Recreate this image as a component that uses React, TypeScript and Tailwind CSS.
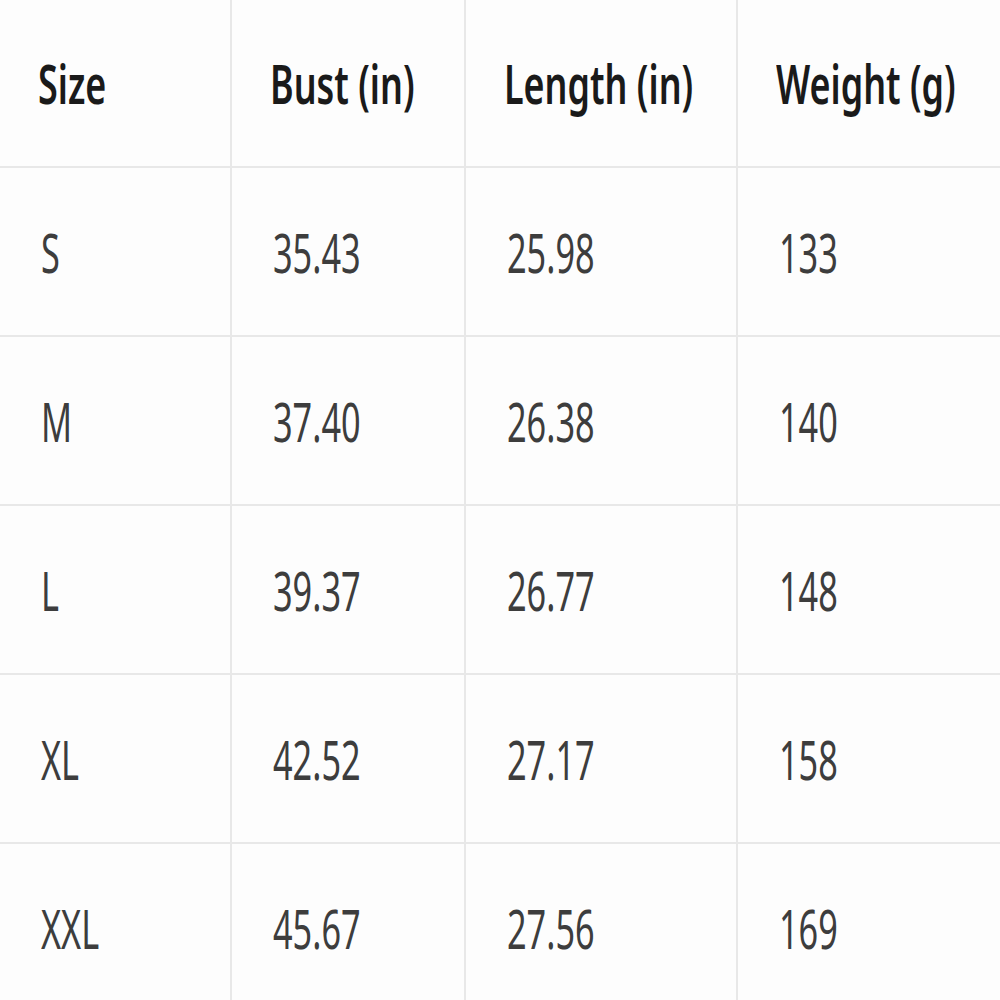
const headers = ['Size', 'Bust (in)', 'Length (in)', 'Weight (g)'];

const rows = [
  ['S', '35.43', '25.98', '133'],
  ['M', '37.40', '26.38', '140'],
  ['L', '39.37', '26.77', '148'],
  ['XL', '42.52', '27.17', '158'],
  ['XXL', '45.67', '27.56', '169'],
];

// column widths incl. right border
const colClass = ['w-[232px] border-r-2', 'w-[234px] border-r-2', 'w-[272px] border-r-2', 'w-[262px]'];

function Cell({ text, col, header }: { text: string; col: number; header?: boolean }) {
  return (
    <div
      className={`flex shrink-0 items-center border-b-2 border-[#e8e8e8] ${colClass[col]} ${
        header ? 'h-[168px] pl-[38px]' : 'h-[169px] pl-[41px]'
      }`}
    >
      <span
        className={`inline-block origin-left whitespace-nowrap text-[54px] leading-none ${
          header
            ? 'scale-x-[0.665] font-semibold text-[#1a1a1a]'
            : 'scale-x-[0.635] font-normal text-[#3d3d3d]'
        }`}
      >
        {text}
      </span>
    </div>
  );
}

export default function App() {
  return (
    <div
      className="h-[1000px] w-[1000px] overflow-hidden bg-[#fdfdfd]"
      style={{ fontFamily: '"Noto Sans", "Open Sans", sans-serif' }}
    >
      <div className="flex">
        {headers.map((h, i) => (
          <Cell key={h} text={h} col={i} header />
        ))}
      </div>
      {rows.map((row) => (
        <div key={row[0]} className="flex">
          {row.map((v, i) => (
            <Cell key={i} text={v} col={i} />
          ))}
        </div>
      ))}
    </div>
  );
}
